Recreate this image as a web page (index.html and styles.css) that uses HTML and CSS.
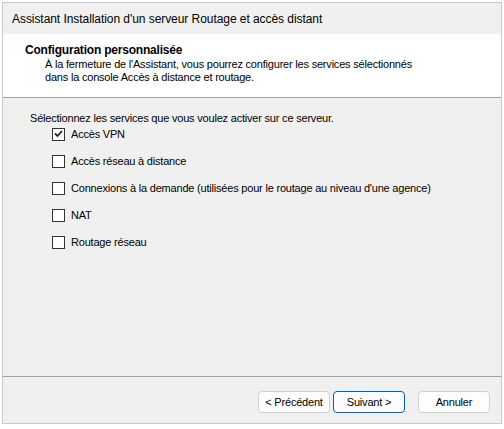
FILE: index.html
```html
<!DOCTYPE html>
<html lang="fr">
<head>
<meta charset="utf-8">
<link rel="stylesheet" href="styles.css">
</head>
<body>
<div class="window">
  <div class="titlebar">Assistant Installation d'un serveur Routage et accès distant</div>
  <div class="header">
    <div class="h-title">Configuration personnalisée</div>
    <div class="h-desc">À la fermeture de l'Assistant, vous pourrez configurer les services sélectionnés<br>dans la console Accès à distance et routage.</div>
  </div>
  <div class="content">
    <div class="prompt">Sélectionnez les services que vous voulez activer sur ce serveur.</div>
    <div class="options">
      <label class="opt"><span class="box checked"><svg width="9" height="8" viewBox="0 0 9 8"><path d="M1 3.5 L3.5 6 L8 1" fill="none" stroke="#222" stroke-width="1.8"/></svg></span>Accès VPN</label>
      <label class="opt"><span class="box"></span>Accès réseau à distance</label>
      <label class="opt"><span class="box"></span>Connexions à la demande (utilisées pour le routage au niveau d'une agence)</label>
      <label class="opt"><span class="box"></span>NAT</label>
      <label class="opt"><span class="box"></span>Routage réseau</label>
    </div>
  </div>
  <div class="footer">
    <button class="btn">&lt; Précédent</button>
    <button class="btn primary">Suivant &gt;</button>
    <button class="btn cancel">Annuler</button>
  </div>
</div>
</body>
</html>
```

FILE: styles.css
```css
html, body {
  margin: 0;
  padding: 0;
  background: #ffffff;
}
body {
  font-family: "Liberation Sans", Arial, sans-serif;
  font-size: 11px;
  letter-spacing: -0.2px;
  color: #000;
  padding: 2px 2px 4px 2px;
}
.window {
  width: 500px;
  height: 422px;
  border: 1px solid #c8c8c8;
  background: #f0f0f0;
  display: flex;
  flex-direction: column;
  box-sizing: border-box;
}
.titlebar {
  height: 31px;
  display: flex;
  align-items: center;
  padding-left: 9px;
  font-size: 12px;
  letter-spacing: -0.06px;
  background: #f0f0f0;
  flex: none;
}
.header {
  background: #ffffff;
  height: 64px;
  box-sizing: border-box;
  border-bottom: 1px solid #a0a0a0;
  padding: 9px 0 0 22px;
  flex: none;
}
.h-title {
  font-weight: bold;
  font-size: 12px;
  letter-spacing: -0.2px;
  line-height: 15px;
}
.h-desc {
  padding-left: 20px;
  line-height: 13px;
}
.content {
  flex: 1;
  border-bottom: 1px solid #a0a0a0;
  padding: 12px 0 0 27px;
}
.prompt {
  line-height: 16px;
}
.options {
  display: flex;
  flex-direction: column;
  padding-left: 22px;
  gap: 11px;
}
.opt {
  display: flex;
  align-items: center;
  height: 16px;
  gap: 6px;
  white-space: nowrap;
}
.box {
  width: 11px;
  height: 11px;
  border: 1px solid #333;
  background: #fff;
  display: flex;
  align-items: center;
  justify-content: center;
  flex: none;
}
.footer {
  height: 46px;
  box-sizing: border-box;
  flex: none;
  display: flex;
  align-items: flex-start;
  justify-content: flex-end;
  padding: 14px 11px 0 0;
  gap: 3px;
}
.btn {
  font-family: inherit;
  font-size: 11px;
  letter-spacing: -0.2px;
  width: 72px;
  height: 22px;
  background: #fdfdfd;
  border: 1px solid #d0d0d0;
  border-radius: 4px;
  padding: 0;
  color: #000;
}
.btn.primary {
  border: 1px solid #005fb8;
}
.btn.cancel {
  margin-left: 10px;
}
```
